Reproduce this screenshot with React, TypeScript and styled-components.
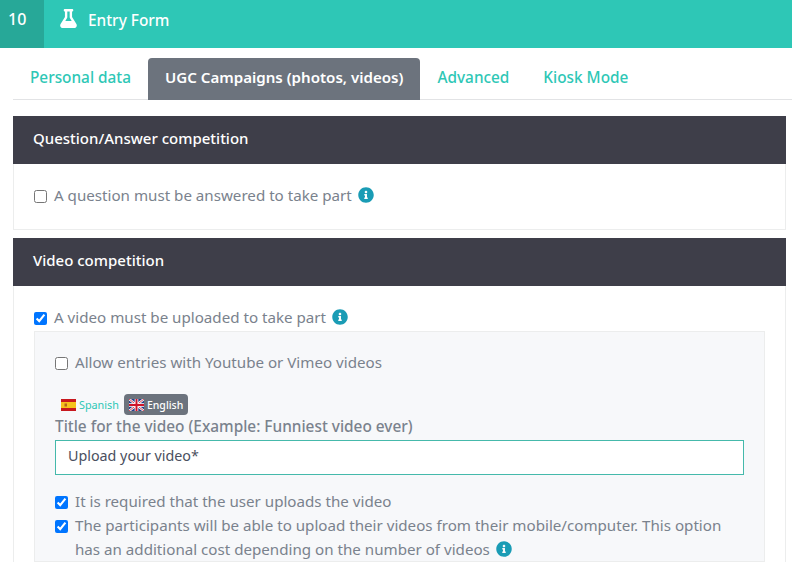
import styled, { createGlobalStyle } from 'styled-components';
import { FaFlask, FaInfoCircle } from 'react-icons/fa';

const GlobalStyle = createGlobalStyle`
  html, body {
    margin: 0;
    padding: 0;
    height: 100%;
    overflow: hidden;
    background: #fff;
    font-family: 'Noto Sans', 'Open Sans', sans-serif;
  }
`;

const SpainFlag = () => (
  <FlagSvg viewBox="0 0 15 12">
    <rect width="15" height="12" fill="#c8181e" />
    <rect y="3" width="15" height="6" fill="#f6c21c" />
    <rect x="3.5" y="4.5" width="2.5" height="3" fill="#b5651d" />
  </FlagSvg>
);

const UkFlag = () => (
  <FlagSvg viewBox="0 0 15 12">
    <rect width="15" height="12" fill="#27408b" />
    <path d="M0 0L15 12M15 0L0 12" stroke="#fff" strokeWidth="2.4" />
    <path d="M0 0L15 12M15 0L0 12" stroke="#cf142b" strokeWidth="0.8" />
    <path d="M7.5 0V12M0 6H15" stroke="#fff" strokeWidth="3.6" />
    <path d="M7.5 0V12M0 6H15" stroke="#cf142b" strokeWidth="2" />
  </FlagSvg>
);

export default function App() {
  return (
    <>
      <GlobalStyle />
      <Page>
        <TopBar>
          <Badge>10</Badge>
          <FlaskIcon />
          <TopTitle>Entry Form</TopTitle>
        </TopBar>

        <Content>
          <Tabs>
            <Tab>Personal data</Tab>
            <Tab $active>UGC Campaigns (photos, videos)</Tab>
            <Tab>Advanced</Tab>
            <Tab>Kiosk Mode</Tab>
          </Tabs>

          <Panel>
            <PanelHeader>Question/Answer competition</PanelHeader>
            <PanelBody $height={66}>
              <CheckRow>
                <Check type="checkbox" readOnly />
                <span>
                  A question must be answered to take part <InfoIcon />
                </span>
              </CheckRow>
            </PanelBody>
          </Panel>

          <Panel>
            <PanelHeader>Video competition</PanelHeader>
            <PanelBody>
              <CheckRow>
                <Check type="checkbox" checked readOnly />
                <span>
                  A video must be uploaded to take part <InfoIcon />
                </span>
              </CheckRow>
              <Inset>
                <CheckRow>
                  <Check type="checkbox" readOnly />
                  <span>Allow entries with Youtube or Vimeo videos</span>
                </CheckRow>

                <Langs>
                  <Lang>
                    <SpainFlag />
                    Spanish
                  </Lang>
                  <Lang $active>
                    <UkFlag />
                    English
                  </Lang>
                </Langs>
                <FieldLabel>Title for the video (Example: Funniest video ever)</FieldLabel>
                <TextInput defaultValue="Upload your video*" />

                <CheckList>
                  <CheckRow>
                    <Check type="checkbox" checked readOnly />
                    <span>It is required that the user uploads the video</span>
                  </CheckRow>
                  <CheckRow>
                    <Check type="checkbox" checked readOnly />
                    <span>
                      The participants will be able to upload their videos from their
                      mobile/computer. This option has an additional cost depending on the
                      number of videos <InfoIcon />
                    </span>
                  </CheckRow>
                </CheckList>
              </Inset>
            </PanelBody>
          </Panel>
        </Content>
      </Page>
    </>
  );
}

const Page = styled.div`
  width: 792px;
  height: 562px;
  overflow: hidden;
`;

const TopBar = styled.div`
  height: 48px;
  display: flex;
  align-items: flex-start;
  background: #2ec7b6;
  color: #fff;
`;

const Badge = styled.div`
  width: 44px;
  height: 48px;
  padding: 9px 0 0 8px;
  box-sizing: border-box;
  background: #27a898;
  font-size: 16px;
  font-weight: 500;
  line-height: 20px;
`;

const FlaskIcon = styled(FaFlask)`
  width: 19px;
  height: 19px;
  margin: 9px 0 0 15px;
`;

const TopTitle = styled.div`
  margin: 11px 0 0 10px;
  font-size: 15.4px;
  font-weight: 500;
  line-height: 20px;
`;

const Content = styled.div`
  padding: 10px 6px 0 13px;
`;

const Tabs = styled.div`
  display: flex;
  height: 42px;
  box-sizing: border-box;
  margin-right: -6px;
  border-bottom: 1px solid #e2e3e5;
`;

const Tab = styled.div<{ $active?: boolean }>`
  height: 42px;
  box-sizing: border-box;
  padding: 0 17px;
  border-radius: 4px 4px 0 0;
  font-size: ${({ $active }) => ($active ? '15.1px' : '15.35px')};
  line-height: 39px;
  font-weight: ${({ $active }) => ($active ? 600 : 500)};
  color: ${({ $active }) => ($active ? '#fff' : '#2ec7b6')};
  background: ${({ $active }) => ($active ? '#6c737d' : 'transparent')};
`;

const Panel = styled.section`
  margin-top: 8px;

  &:first-of-type {
    margin-top: 16px;
  }
`;

const PanelHeader = styled.div`
  height: 48px;
  padding-left: 20px;
  background: #3e3e49;
  color: #fff;
  font-size: 15px;
  font-weight: 500;
  line-height: 44px;
`;

const PanelBody = styled.div<{ $height?: number }>`
  box-sizing: border-box;
  height: ${({ $height }) => ($height ? `${$height}px` : 'auto')};
  padding: 19px 20px 0;
  border: 1px solid #eceded;
  border-top: 0;
`;

const CheckRow = styled.label`
  display: flex;
  align-items: flex-start;
  gap: 7px;
  color: #7a828d;
  font-size: 15.15px;
  line-height: 24px;
`;

const Check = styled.input`
  flex: none;
  width: 13px;
  height: 13px;
  margin: 7px 0 0;
`;

const InfoIcon = styled(FaInfoCircle)`
  width: 16px;
  height: 16px;
  margin-left: 2px;
  vertical-align: -2px;
  color: #1a9cb5;
`;

const Inset = styled.div`
  margin-top: 2px;
  padding: 18px 20px 0;
  background: #f7f8fa;
  border: 1px solid #eceded;
`;

const Langs = styled.div`
  display: flex;
  align-items: center;
  gap: 5px;
  margin-top: 20px;
  padding-left: 6px;
`;

const Lang = styled.div<{ $active?: boolean }>`
  display: flex;
  align-items: center;
  gap: 3px;
  height: 21px;
  padding: 0 ${({ $active }) => ($active ? '5px' : '0')};
  border-radius: 4px;
  font-size: ${({ $active }) => ($active ? '10.5px' : '10.8px')};
  font-weight: ${({ $active }) => ($active ? 500 : 400)};
  color: ${({ $active }) => ($active ? '#fff' : '#2ec7b6')};
  background: ${({ $active }) => ($active ? '#6c737d' : 'transparent')};
`;

const FlagSvg = styled.svg`
  width: 15px;
  height: 12px;
`;

const FieldLabel = styled.div`
  margin-top: 1px;
  color: #7a828d;
  font-size: 15.4px;
  font-weight: 500;
  line-height: 22px;
`;

const TextInput = styled.input`
  display: block;
  width: 100%;
  height: 35px;
  box-sizing: border-box;
  margin-top: 2px;
  padding: 0 12px 5px;
  border: 1px solid #45b9ab;
  outline: 0;
  background: #fff;
  color: #4a4f5e;
  font: 400 14.3px 'Noto Sans', sans-serif;
`;

const CheckList = styled.div`
  margin-top: 14px;
`;
